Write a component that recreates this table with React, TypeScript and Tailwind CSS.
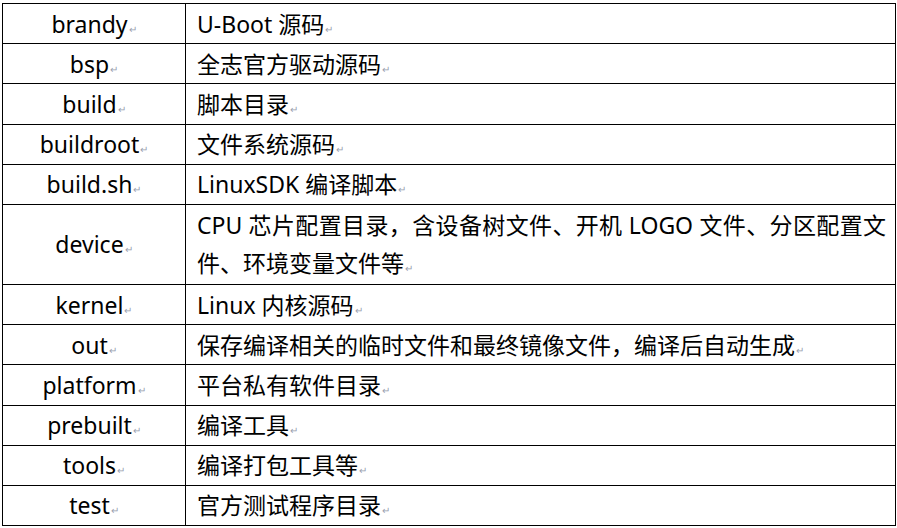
const rows: { name: string; desc: string[]; tall?: boolean }[] = [
  { name: "brandy", desc: ["U-Boot 源码"] },
  { name: "bsp", desc: ["全志官方驱动源码"] },
  { name: "build", desc: ["脚本目录"] },
  { name: "buildroot", desc: ["文件系统源码"] },
  { name: "build.sh", desc: ["LinuxSDK 编译脚本"] },
  {
    name: "device",
    desc: [
      "CPU 芯片配置目录，含设备树文件、开机 LOGO 文件、分区配置文",
      "件、环境变量文件等",
    ],
    tall: true,
  },
  { name: "kernel", desc: ["Linux 内核源码"] },
  { name: "out", desc: ["保存编译相关的临时文件和最终镜像文件，编译后自动生成"] },
  { name: "platform", desc: ["平台私有软件目录"] },
  { name: "prebuilt", desc: ["编译工具"] },
  { name: "tools", desc: ["编译打包工具等"] },
  { name: "test", desc: ["官方测试程序目录"] },
];

const Mark = () => (
  <span className="ml-[1px] text-[10px] leading-none text-gray-400">↵</span>
);

const App = () => {
  return (
    <div
      className="min-h-[528px] w-[897px] bg-white pl-[2px] pt-[3px] text-black"
      style={{ fontFamily: '"Noto Sans", "Noto Sans CJK SC", sans-serif' }}
    >
      <table className="w-[894px] table-fixed border-collapse text-[23px]">
        <colgroup>
          <col className="w-[183px]" />
          <col />
        </colgroup>
        <tbody>
          {rows.map((r) => (
            <tr key={r.name} className={r.tall ? "h-[80px]" : "h-[40.2px]"}>
              <td className="border border-black p-0 text-center align-middle leading-[38px]">
                {r.name}
                <Mark />
              </td>
              <td className="border border-black py-0 pl-[11px] pr-[9px] align-middle leading-[38px]">
                {r.desc.length > 1 ? (
                  <>
                    <div className="whitespace-nowrap text-justify [text-align-last:justify]">
                      {r.desc[0]}
                    </div>
                    <div className="whitespace-nowrap">
                      {r.desc[1]}
                      <Mark />
                    </div>
                  </>
                ) : (
                  <span className="whitespace-nowrap">
                    {r.desc[0]}
                    <Mark />
                  </span>
                )}
              </td>
            </tr>
          ))}
        </tbody>
      </table>
    </div>
  );
};

export default App;
